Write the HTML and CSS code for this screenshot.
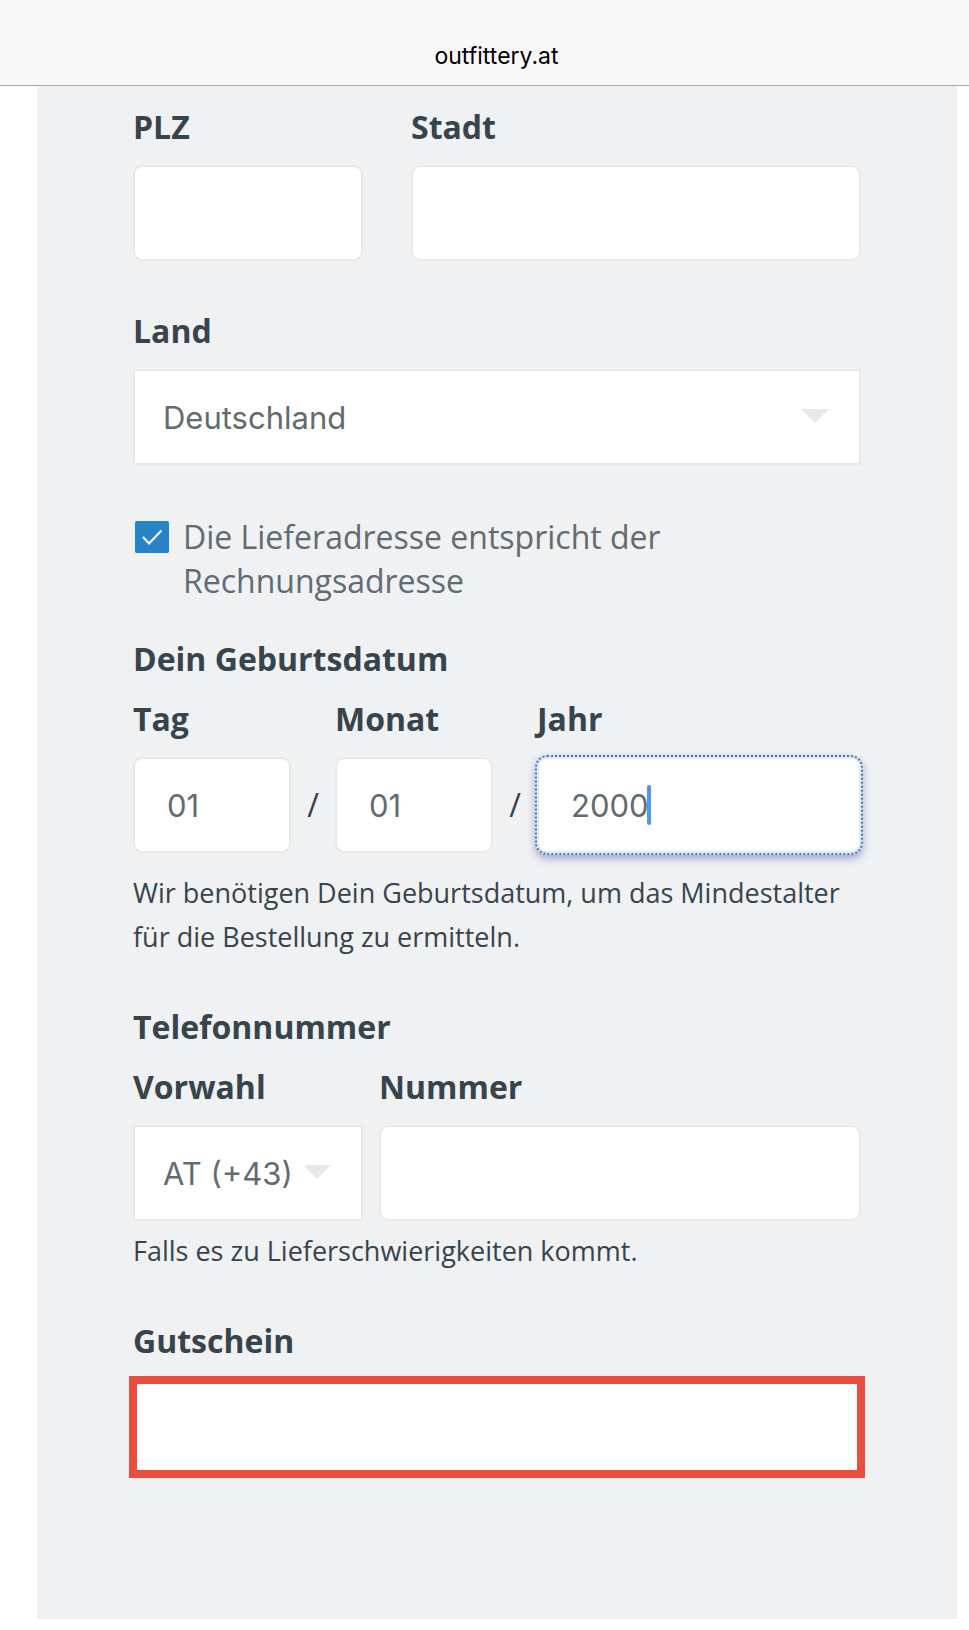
FILE: index.html
```
<!DOCTYPE html>
<html lang="de">
<head>
  <meta charset="UTF-8">
  <meta name="viewport" content="width=device-width, initial-scale=1.0">
  <title>Outfittery</title>
  <link rel="stylesheet" href="styles.css">
</head>
<body>
  <header class="browser-bar">outfittery.at</header>

  <main>
    <form class="address-form">
      <div class="row city-row">
        <div class="field">
          <label for="plz">PLZ</label>
          <input type="text" id="plz" name="plz">
        </div>
        <div class="field">
          <label for="stadt">Stadt</label>
          <input type="text" id="stadt" name="stadt">
        </div>
      </div>

      <div class="field country">
        <label for="land">Land</label>
        <div class="select">
          <select id="land" name="land">
            <option>Österreich</option>
            <option selected>Deutschland</option>
            <option>Schweiz</option>
          </select>
        </div>
      </div>

      <div class="check-row">
        <div class="check">
          <input type="checkbox" id="same-address" name="same-address" checked>
          <svg viewBox="0 0 34 32" aria-hidden="true"><path d="M8 16l6 6.500L26.500 9.500"/></svg>
        </div>
        <label for="same-address">Die Lieferadresse entspricht der Rechnungsadresse</label>
      </div>

      <fieldset>
        <legend>Dein Geburtsdatum</legend>
        <div class="row date-row">
          <div class="field">
            <label for="tag">Tag</label>
            <input type="text" id="tag" name="tag" value="01">
          </div>
          <span class="slash">/</span>
          <div class="field">
            <label for="monat">Monat</label>
            <input type="text" id="monat" name="monat" value="01">
          </div>
          <span class="slash">/</span>
          <div class="field">
            <label for="jahr">Jahr</label>
            <div class="year">
              <input type="text" class="active" id="jahr" name="jahr" value="2000">
              <span class="caret"></span>
            </div>
          </div>
        </div>
        <p class="hint date-hint">Wir benötigen Dein Geburtsdatum, um das Mindestalter für die Bestellung zu ermitteln.</p>
      </fieldset>

      <fieldset>
        <legend>Telefonnummer</legend>
        <div class="row phone-row">
          <div class="field">
            <label for="vorwahl">Vorwahl</label>
            <div class="select">
              <select id="vorwahl" name="vorwahl">
                <option selected>AT (+43)</option>
                <option>DE (+49)</option>
                <option>CH (+41)</option>
              </select>
            </div>
          </div>
          <div class="field">
            <label for="nummer">Nummer</label>
            <input type="tel" id="nummer" name="nummer">
          </div>
        </div>
        <p class="hint">Falls es zu Lieferschwierigkeiten kommt.</p>
      </fieldset>

      <div class="field voucher">
        <label for="gutschein">Gutschein</label>
        <input type="text" id="gutschein" name="gutschein">
      </div>
    </form>
  </main>
</body>
</html>
```

FILE: styles.css
```
* {
  box-sizing: border-box;
}
body {
  margin: 0;
  background-color: #ffffff;
  color: #37444c;
  font-family: "Open Sans", sans-serif;
  font-size: 32px;
  line-height: 44px;
}
.browser-bar {
  height: 86px;
  padding-top: 34px;
  border-bottom: 1px solid #a6a8a9;
  background-color: #f8f8f8;
  color: #000000;
  font-family: Inter, sans-serif;
  font-size: 23px;
  text-align: center;
  padding-left: 24px;
}
main {
  margin: 0 12px 11px 37px;
  padding: 19px 96px 141px;
  background-color: #eff1f3;
}
.row {
  display: grid;
}
.city-row {
  grid-template-columns: 23fr 45fr;
  gap: 48px;
  margin-bottom: 48px;
}
.date-row {
  grid-template-columns: 158fr 44px 158fr 44px 324fr;
}
.phone-row {
  grid-template-columns: 230px 1fr;
  gap: 16px;
}
.field {
  display: flex;
  flex-direction: column;
  gap: 16px;
  min-width: 0;
}
.field label,
legend {
  font-weight: bold;
}
input,
select {
  display: block;
  width: 100%;
  height: 96px;
  margin: 0;
  padding: 0 32px;
  border: 2px solid #e7e9eb;
  border-radius: 10px;
  background-color: #ffffff;
  color: #626b70;
  font-family: Inter, sans-serif;
  font-size: 31px;
}
.select {
  position: relative;
}
.select select {
  appearance: none;
  padding: 0 28px;
  border-radius: 0;
}
.select::after {
  content: "";
  position: absolute;
  top: 40px;
  right: 32px;
  border: 14px solid transparent;
  border-top-color: #e7e9ea;
  border-bottom: 0;
  pointer-events: none;
}
.country {
  margin-bottom: 50px;
}
.check-row {
  display: flex;
  gap: 14px;
  margin: 0 0 34px 2px;
  color: #626b70;
}
.check-row label {
  max-width: 520px;
}
.check {
  position: relative;
  flex: none;
  width: 34px;
  height: 32px;
  margin-top: 6px;
}
.check input {
  appearance: none;
  height: 32px;
  padding: 0;
  border: 0;
  border-radius: 2px;
}
.check input:checked {
  background-color: #2683c6;
}
.check svg {
  position: absolute;
  top: 0;
  left: 0;
  width: 34px;
  height: 32px;
  fill: none;
  stroke: #ffffff;
  stroke-width: 2;
  pointer-events: none;
}
fieldset {
  min-width: 0;
  margin: 0 0 46px;
  padding: 0;
  border: 0;
}
legend {
  margin-bottom: 16px;
  padding: 0;
}
.slash {
  align-self: end;
  line-height: 96px;
  text-align: center;
}
.year {
  position: relative;
}
.active {
  outline: 2px dotted #5a7ba8;
  border-color: #e0ecf9;
  box-shadow: 0 0 0 2px #cfe2f5, 0 4px 8px 1px rgba(70, 60, 180, 0.5);
}
.caret {
  position: absolute;
  top: 28px;
  left: 110px;
  width: 4px;
  height: 40px;
  border-radius: 2px;
  background-color: #4f97ee;
}
.hint {
  margin: 8px 0 0;
  font-size: 27px;
}
.date-hint {
  margin-top: 18px;
}
.voucher {
  gap: 13px;
}
.voucher input {
  width: auto;
  height: 102px;
  margin: 0 -4px;
  border: 8px solid #ea4d3e;
  border-radius: 0;
}
```
